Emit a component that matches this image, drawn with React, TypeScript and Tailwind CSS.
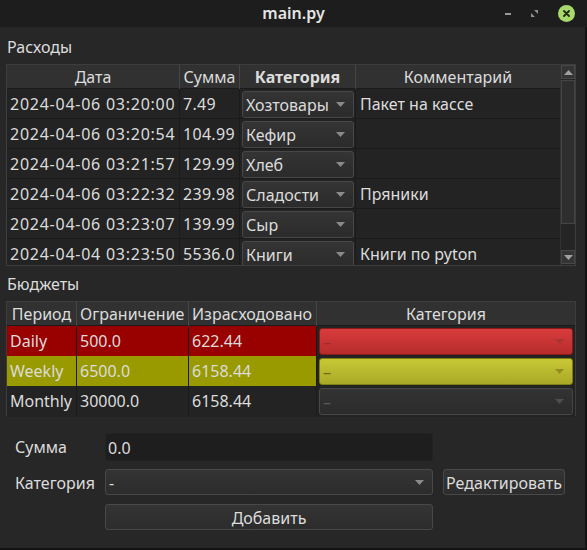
import React from 'react';

const font = { fontFamily: '"Noto Sans", "Open Sans", sans-serif' };

const expenses = [
  { date: '2024-04-06 03:20:00', sum: '7.49', cat: 'Хозтовары', note: 'Пакет на кассе' },
  { date: '2024-04-06 03:20:54', sum: '104.99', cat: 'Кефир', note: '' },
  { date: '2024-04-06 03:21:57', sum: '129.99', cat: 'Хлеб', note: '' },
  { date: '2024-04-06 03:22:32', sum: '239.98', cat: 'Сладости', note: 'Пряники' },
  { date: '2024-04-06 03:23:07', sum: '139.99', cat: 'Сыр', note: '' },
  { date: '2024-04-04 03:23:50', sum: '5536.0', cat: 'Книги', note: 'Книги по pyton' },
];

const budgets = [
  { period: 'Daily', limit: '500.0', spent: '622.44', tone: 'red' },
  { period: 'Weekly', limit: '6500.0', spent: '6158.44', tone: 'yellow' },
  { period: 'Monthly', limit: '30000.0', spent: '6158.44', tone: 'none' },
];

const Arrow = ({ color = '#8a8a8a' }: { color?: string }) => (
  <svg width="9" height="5" viewBox="0 0 9 5">
    <path d="M0 0h9L4.5 5z" fill={color} />
  </svg>
);

const Combo: React.FC<{ text: string; className?: string; textClass?: string; arrow?: string }> = ({
  text,
  className = 'bg-gradient-to-b from-[#343434] to-[#2c2c2c] border-[#454545]',
  textClass = 'text-[#dcdcdc]',
  arrow,
}) => (
  <div className={`flex items-center justify-between rounded-[3px] border pl-[3px] pr-[8px] ${className}`}>
    <span className={`truncate pt-[1px] ${textClass}`}>{text}</span>
    <Arrow color={arrow} />
  </div>
);

const App: React.FC = () => {
  return (
    <div className="w-[587px] h-[550px] bg-[#272727] text-[#dcdcdc] text-[16px] flex flex-col overflow-hidden" style={font}>
      {/* title bar */}
      <div className="h-[27px] bg-[#1d1d1d] flex items-center relative shrink-0">
        <span className="absolute left-0 right-0 text-center text-[16px] font-semibold text-[#e4e4e4] leading-[27px]">main.py</span>
        <div className="ml-auto flex items-center pr-[12px] relative">
          <div className="w-[6px] h-[2px] bg-[#9a9a9a] mr-[20px]" />
          <svg width="7" height="7" viewBox="0 0 7 7" className="mr-[20px]">
            <path d="M0 3V7H4zM7 4V0H3z" fill="#8f8f8f" />
          </svg>
          <div className="w-[17px] h-[17px] rounded-full bg-[#a9d96c] flex items-center justify-center">
            <svg width="7" height="7" viewBox="0 0 7 7">
              <path d="M1 1L6 6M6 1L1 6" stroke="#1d2a10" strokeWidth="1.8" strokeLinecap="round" />
            </svg>
          </div>
        </div>
      </div>

      <div className="flex-1 flex border-r-2 border-b-2 border-[#141414]">
        <div className="flex-1 flex flex-col pl-[6px] pr-[9px]">
          <div className="h-[20px] leading-[20px] mt-[10px] mb-[7px] pl-[1px]">Расходы</div>

          {/* expenses table */}
          <div className="h-[202px] border border-[#3d3d3d] flex overflow-hidden shrink-0">
            <div className="flex-1 flex flex-col bg-[#232323]">
              <div className="grid grid-cols-[173px_60px_116px_1fr] h-[24px] shrink-0 bg-[#313131] border-b border-[#1b1b1b] leading-[25px] text-center">
                <div className="border-r border-[#474747]">Дата</div>
                <div className="border-r border-[#474747]">Сумма</div>
                <div className="border-r border-[#474747] font-bold">Категория</div>
                <div>Комментарий</div>
              </div>
              {expenses.map((e) => (
                <div key={e.date} className="grid grid-cols-[173px_60px_116px_1fr] h-[30px] shrink-0 border-b border-[#1b1b1b]">
                  <div className="border-r border-[#1b1b1b] pl-[3px] pt-[1px] leading-[29px] whitespace-nowrap tracking-[0.75px]">{e.date}</div>
                  <div className="border-r border-[#1b1b1b] pl-[3px] pt-[1px] leading-[29px] tracking-[0.3px]">{e.sum}</div>
                  <div className="border-r border-[#1b1b1b] py-[2px] pl-[2px] pr-[1px] flex flex-col">
                    <Combo text={e.cat} className="flex-1 bg-gradient-to-b from-[#343434] to-[#2b2b2b] border-[#474747]" />
                  </div>
                  <div className="pl-[4px] pt-[1px] leading-[29px]">{e.note}</div>
                </div>
              ))}
            </div>
            {/* scrollbar */}
            <div className="w-[15px] bg-[#252525] border-l border-[#333] flex flex-col">
              <div className="h-[14px] bg-[#343434] border border-[#474747] flex items-center justify-center">
                <svg width="9" height="5" viewBox="0 0 9 5"><path d="M0 5h9L4.5 0z" fill="#a0a0a0" /></svg>
              </div>
              <div className="h-[144px] mt-[1px] bg-[#2e2e2e] border border-[#444]" />
              <div className="flex-1" />
              <div className="h-[14px] bg-[#343434] border border-[#474747] flex items-center justify-center mb-[1px]">
                <Arrow color="#a0a0a0" />
              </div>
            </div>
          </div>

          <div className="h-[20px] leading-[20px] mt-[8px] mb-[7px] pl-[1px]">Бюджеты</div>

          {/* budgets table */}
          <div className="border border-[#3d3d3d] bg-[#232323] shrink-0">
            <div className="grid grid-cols-[70px_112px_128px_1fr] h-[24px] bg-[#313131] border-b border-[#1b1b1b] leading-[25px]">
              <div className="border-r border-[#474747] text-center">Период</div>
              <div className="border-r border-[#474747] pl-[3px]">Ограничение</div>
              <div className="border-r border-[#474747] pl-[3px] whitespace-nowrap overflow-hidden">Израсходовано</div>
              <div className="text-center">Категория</div>
            </div>
            {budgets.map((b) => {
              const row =
                b.tone === 'red' ? 'bg-[#990000]' : b.tone === 'yellow' ? 'bg-[#999900]' : 'bg-[#232323]';
              const combo =
                b.tone === 'red'
                  ? 'bg-gradient-to-b from-[#d83c3c] to-[#b72c2c] border-[#8c1a1a]'
                  : b.tone === 'yellow'
                  ? 'bg-gradient-to-b from-[#c8c836] to-[#a9a927] border-[#7f7f12]'
                  : 'bg-gradient-to-b from-[#333333] to-[#2b2b2b] border-[#474747]';
              const arrow = b.tone === 'red' ? '#a33' : b.tone === 'yellow' ? '#8e8e22' : '#4e4e4e';
              const dash = b.tone === 'red' ? 'text-[#9d2c2c]' : b.tone === 'yellow' ? 'text-[#6b6b16]' : 'text-[#5a5a5a]';
              return (
                <div key={b.period} className="grid grid-cols-[70px_112px_128px_1fr] h-[30px] border-b border-[#1b1b1b] last:border-b-0 last:h-[29px]">
                  <div className={`${row} border-r border-[#1b1b1b] pl-[3px] pt-[1px] leading-[29px]`}>{b.period}</div>
                  <div className={`${row} border-r border-[#1b1b1b] pl-[3px] pt-[1px] leading-[29px]`}>{b.limit}</div>
                  <div className={`${row} border-r border-[#1b1b1b] pl-[3px] pt-[1px] leading-[29px]`}>{b.spent}</div>
                  <div className="bg-[#232323] py-[2px] pl-[2px] pr-[2px] flex flex-col">
                    <Combo text="–" className={`flex-1 ${combo}`} textClass={dash} arrow={arrow} />
                  </div>
                </div>
              );
            })}
          </div>

          {/* form */}
          <div className="grid grid-cols-[90px_328px_10px_122px] mt-[16px] pl-[9px] items-center gap-y-[8px]">
            <div className="leading-[28px] pt-[1px]">Сумма</div>
            <div className="h-[28px] bg-[#1e1e1e] rounded-[3px] border border-[#222] pl-[2px] pt-[1px] leading-[26px]">0.0</div>
            <div />
            <div />

            <div className="pt-[1px]">Категория</div>
            <Combo text="-" className="h-[26px] bg-gradient-to-b from-[#343434] to-[#2c2c2c] border-[#484848]" />
            <div />
            <div className="h-[26px] rounded-[3px] border border-[#484848] bg-gradient-to-b from-[#343434] to-[#2c2c2c] flex items-center justify-center whitespace-nowrap pt-[1px]">
              Редактировать
            </div>

            <div />
            <div className="h-[26px] mt-[1px] rounded-[3px] border border-[#484848] bg-gradient-to-b from-[#343434] to-[#2c2c2c] flex items-center justify-center pt-[1px]">
              Добавить
            </div>
            <div />
            <div />
          </div>
        </div>
      </div>
    </div>
  );
};

export default App;
